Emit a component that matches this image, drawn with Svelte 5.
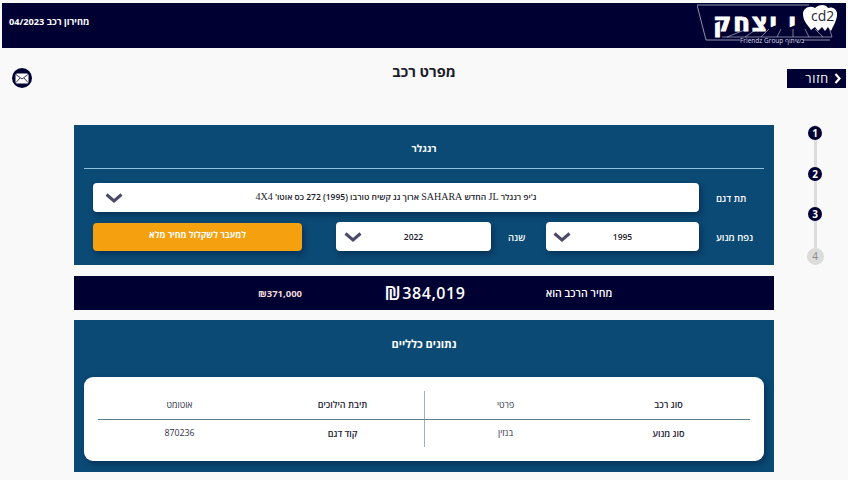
<script>
  const steps = [1, 2, 3, 4];
  const specs = [
    [
      { label: 'סוג רכב', value: 'פרטי' },
      { label: 'תיבת הילוכים', value: 'אוטומט' }
    ],
    [
      { label: 'סוג מנוע', value: 'בנזין' },
      { label: 'קוד דגם', value: '870236' }
    ]
  ];
</script>

<div class="page" dir="rtl">
  <header class="topbar">
    <div class="logo">
      <svg width="140" height="42" viewBox="0 0 140 42">
        <path d="M0 1 H112 M0 1 L9 36" fill="none" stroke="#cfd0dc" stroke-width="0.7" />
        <path d="M50 25 L30 33 M60 25 L48 33 M72 25 L64 33 M84 25 L80 33 M96 25 L96 33 M108 25 L112 33 M118 25 L126 33 M131 20 L135 33 M25 33 H135" fill="none" stroke="#cfd0dc" stroke-width="0.6" />
        <path d="M9 36 H43 M106 36 H133" stroke="#cfd0dc" stroke-width="0.7" />
        <path d="M106 10 C106 4 113 1 118 4 C122 0 129 0 131 4 C136 2 141 6 140 12 C139 18 136 22 134 27 L131 23 L128 27 L125 23 L121 27 L118 23 L114 26 C112 22 106 18 106 10 Z" fill="#fff" />
      </svg>
      <span class="logo-name">י יצחק</span>
      <span class="logo-mark">cd2</span>
      <span class="logo-sub">Friendz Group בשיתוף</span>
    </div>
    <span class="pricelist">מחירון רכב 04/2023</span>
  </header>

  <div class="titlerow">
    <div class="back">
      <svg width="7" height="11" viewBox="0 0 7 11"><path d="M1.5 1 L5.5 5.5 L1.5 10" fill="none" stroke="#fff" stroke-width="2.2" /></svg>
      <span>חזור</span>
    </div>
    <h1>מפרט רכב</h1>
    <div class="mail">
      <svg width="14" height="11" viewBox="0 0 14 11">
        <rect x="0.5" y="0.5" width="13" height="10" rx="1.5" fill="#fff" />
        <path d="M1 1.5 L7 6 L13 1.5 M1 9.5 L5 5 M13 9.5 L9 5" fill="none" stroke="#000033" stroke-width="0.8" />
      </svg>
    </div>
  </div>

  <div class="layout">
    <div class="stepper">
      {#each steps as s}
        <span class="step" class:off={s === 4}>{s}</span>
      {/each}
    </div>

    <main class="content">
      <section class="panel choose">
        <h2 class="model">רנגלר</h2>
        <div class="form">
          <div class="row">
            <span class="label">תת דגם</span>
            <div class="select wide">
              <span class="model-name">ג'יפ רנגלר <i>JL</i> החדש <i>SAHARA</i> ארוך גג קשיח טורבו (1995) 272 כס אוטו' <i>4X4</i></span>
              <svg class="chev" width="18" height="10" viewBox="0 0 18 10"><path d="M1.5 1.5 L9 8 L16.5 1.5" fill="none" stroke="#4a4a68" stroke-width="3" /></svg>
            </div>
          </div>
          <div class="row">
            <span class="label">נפח מנוע</span>
            <div class="select engine">
              <span>1995</span>
              <svg class="chev" width="18" height="10" viewBox="0 0 18 10"><path d="M1.5 1.5 L9 8 L16.5 1.5" fill="none" stroke="#4a4a68" stroke-width="3" /></svg>
            </div>
            <span class="label year">שנה</span>
            <div class="select yearbox">
              <span>2022</span>
              <svg class="chev" width="18" height="10" viewBox="0 0 18 10"><path d="M1.5 1.5 L9 8 L16.5 1.5" fill="none" stroke="#4a4a68" stroke-width="3" /></svg>
            </div>
            <button class="cta">למעבר לשקלול מחיר מלא</button>
          </div>
        </div>
      </section>

      <section class="pricebar">
        <span class="price-label">מחיר הרכב הוא</span>
        <span class="price"><span class="ils">₪</span>384,019</span>
        <span class="old">₪371,000</span>
      </section>

      <section class="panel general">
        <h2>נתונים כלליים</h2>
        <div class="card">
          <div class="table">
            {#each specs as row}
              <div class="trow">
                {#each row as cell}
                  <div class="cell">
                    <b>{cell.label}</b>
                    <span>{cell.value}</span>
                  </div>
                {/each}
              </div>
            {/each}
          </div>
        </div>
      </section>
    </main>
  </div>
</div>

<style>
  :global(body) {
    margin: 0;
    background: #f9f9f9;
    overflow: hidden;
  }
  .page {
    width: 848px;
    height: 480px;
    box-sizing: border-box;
    padding: 3px 2px 0 2px;
    font-family: "Open Sans", "DejaVu Sans", sans-serif;
    overflow: hidden;
  }
  .topbar {
    height: 45px;
    background: #000033;
    display: flex;
    align-items: flex-start;
    justify-content: space-between;
    padding: 1px 9px 0 7px;
    box-sizing: border-box;
  }
  .pricelist {
    color: #fff;
    font-size: 9.2px;
    font-weight: 700;
    margin-top: 11px;
  }
  .logo {
    position: relative;
    width: 140px;
    height: 42px;
    direction: ltr;
  }
  .logo svg {
    display: block;
  }
  .logo-name {
    position: absolute;
    left: 16px;
    top: 7px;
    color: #fff;
    font-family: "DejaVu Sans", sans-serif;
    font-size: 25px;
    font-weight: 700;
    line-height: 24px;
    letter-spacing: 1.5px;
    white-space: nowrap;
    -webkit-text-stroke: 0.8px #fff;
  }
  .logo-mark {
    position: absolute;
    left: 114px;
    top: 4px;
    font-size: 14px;
    line-height: 15px;
    color: #2a2a33;
  }
  .logo-sub {
    position: absolute;
    left: 43px;
    top: 33px;
    font-size: 6.5px;
    line-height: 7px;
    color: #d8d8e0;
    white-space: nowrap;
  }
  .titlerow {
    display: grid;
    grid-template-columns: 1fr auto 1fr;
    align-items: start;
    height: 77px;
  }
  .back {
    justify-self: start;
    width: 59px;
    height: 19px;
    margin-top: 21px;
    background: #000033;
    color: #fff;
    display: flex;
    align-items: center;
    gap: 5px;
    padding: 0 5px;
    box-sizing: border-box;
    font-size: 12.5px;
    letter-spacing: 0.8px;
  }
  h1 {
    margin: 14px 0 0;
    font-size: 14.5px;
    font-weight: 700;
    color: #1d1d2b;
    line-height: 20px;
  }
  .mail {
    justify-self: end;
    width: 20px;
    height: 20px;
    margin: 20px 0 0 10px;
    border-radius: 50%;
    background: #000033;
    display: flex;
    align-items: center;
    justify-content: center;
  }
  .layout {
    display: flex;
    align-items: flex-start;
  }
  .stepper {
    width: 62px;
    margin-left: 10px;
    height: 140px;
    display: flex;
    flex-direction: column;
    align-items: center;
    justify-content: space-between;
    box-sizing: border-box;
    padding-top: 1px;
    background: linear-gradient(#dcdcdc, #dcdcdc) center / 3px 100% no-repeat;
  }
  .step {
    width: 14px;
    height: 14px;
    border-radius: 50%;
    background: #000033;
    color: #fff;
    font-size: 10px;
    font-weight: 700;
    line-height: 14px;
    text-align: center;
  }
  .step.off {
    width: 17px;
    height: 17px;
    line-height: 17px;
    background: #dcdcdc;
    color: #888;
    font-weight: 400;
  }
  .content {
    width: 700px;
    display: flex;
    flex-direction: column;
    gap: 11px;
  }
  .panel {
    background: #0a4a75;
    box-sizing: border-box;
  }
  .choose {
    height: 140px;
    padding: 0 10px;
  }
  h2 {
    margin: 0;
    color: #fff;
    font-size: 11px;
    font-weight: 700;
    text-align: center;
  }
  .model {
    height: 43px;
    line-height: 46px;
    font-size: 10px;
    border-bottom: 1px solid #8fc0dc;
  }
  .form {
    padding: 14px 0 0;
    display: flex;
    flex-direction: column;
    gap: 10px;
  }
  .row {
    display: flex;
    align-items: center;
    height: 29px;
  }
  .label {
    width: 65px;
    flex: none;
    color: #fff;
    font-size: 9.5px;
    font-weight: 600;
    text-align: left;
    padding-left: 17px;
    box-sizing: border-box;
    margin-top: 2px;
  }
  .label.year {
    width: 55px;
  }
  .select {
    position: relative;
    background: #fff;
    border-radius: 4px;
    height: 29px;
    display: flex;
    align-items: center;
    justify-content: center;
    font-size: 8.5px;
    font-weight: 600;
    color: #1a1a2a;
    box-shadow: 2px 3px 6px rgba(0, 0, 30, 0.35);
  }
  .select.wide {
    width: 606px;
  }
  .select.engine {
    width: 153px;
  }
  .select.yearbox {
    width: 155px;
  }
  .model-name {
    font-size: 8.5px;
    margin-top: -3px;
  }
  .model-name i {
    font-family: "Liberation Serif", serif;
    font-style: normal;
    font-weight: 400;
    font-size: 10px;
  }
  .chev {
    position: absolute;
    left: 12px;
    top: 10px;
  }
  .engine .chev {
    left: 7px;
  }
  .yearbox .chev {
    left: 8px;
  }
  .cta {
    width: 209px;
    height: 28px;
    margin-right: 34px;
    background: #f5a00f;
    border: 0;
    border-radius: 4px;
    color: #fff;
    font-family: inherit;
    font-size: 8.7px;
    font-weight: 700;
    box-shadow: 2px 3px 6px rgba(0, 0, 30, 0.35);
    padding: 0 0 3px;
  }
  .pricebar {
    height: 34px;
    background: #000033;
    color: #fff;
    display: grid;
    grid-template-columns: 130px 178px 112px;
    padding-right: 130px;
    align-items: center;
    text-align: center;
  }
  .price-label {
    font-size: 10.5px;
    font-weight: 600;
  }
  .price {
    font-size: 16px;
    font-weight: 600;
    letter-spacing: 0.6px;
    direction: ltr;
    display: flex;
    justify-content: center;
    align-items: center;
    gap: 1px;
  }
  .ils {
    font-size: 19px;
  }
  .old {
    font-size: 9.5px;
    font-weight: 700;
    color: #f3d9d9;
    direction: ltr;
  }
  .general {
    height: 152px;
    padding: 17px 10px 0;
    margin-top: -1px;
  }
  .general h2 {
    height: 40px;
    line-height: 13px;
  }
  .card {
    background: #fff;
    border-radius: 9px;
    height: 84px;
    padding: 14px;
    box-sizing: border-box;
    box-shadow: 2px 3px 6px rgba(0, 0, 30, 0.35);
  }
  .table {
    display: flex;
    flex-direction: column;
    height: 56px;
    background: linear-gradient(#9db2bd, #9db2bd) center / 1px 100% no-repeat;
  }
  .trow {
    flex: 1;
    display: grid;
    grid-template-columns: 1fr 1fr;
  }
  .trow:first-child {
    border-bottom: 1px solid #5f7f90;
  }
  .cell {
    display: grid;
    grid-template-columns: 1fr 1fr;
    align-items: center;
    text-align: center;
    font-size: 9px;
    color: #222232;
  }
  .cell b {
    font-weight: 600;
  }
  .cell span {
    font-size: 8.8px;
    font-weight: 500;
    color: #30303f;
  }
</style>
